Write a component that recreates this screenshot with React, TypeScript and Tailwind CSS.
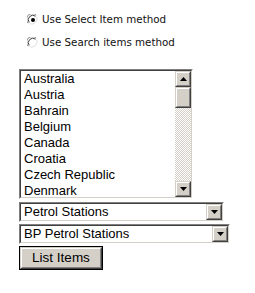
import React from "react";

const Up = () => (
  <svg width="7" height="4" viewBox="0 0 7 4"><path d="M3.5 0 L7 4 L0 4 Z" fill="#000" /></svg>
);
const Down = () => (
  <svg width="7" height="4" viewBox="0 0 7 4"><path d="M0 0 L7 0 L3.5 4 Z" fill="#000" /></svg>
);

function BevelBtn({ children, className = "" }: { children?: React.ReactNode; className?: string }) {
  return (
    <div className={`border border-t-[#d4d0c8] border-l-[#d4d0c8] border-b-[#404040] border-r-[#404040] ${className}`}>
      <div className="w-full h-full border border-t-white border-l-white border-b-[#808080] border-r-[#808080] bg-[#d4d0c8] flex items-center justify-center">
        {children}
      </div>
    </div>
  );
}

function Sunken({ children, className = "" }: { children?: React.ReactNode; className?: string }) {
  return (
    <div className={`border border-t-[#808080] border-l-[#808080] border-b-white border-r-white ${className}`}>
      <div className="w-full h-full border border-t-[#404040] border-l-[#404040] border-b-[#d4d0c8] border-r-[#d4d0c8] bg-white flex">
        {children}
      </div>
    </div>
  );
}

function Radio({ checked }: { checked?: boolean }) {
  return (
    <svg width="12" height="12" viewBox="0 0 12 12">
      <circle cx="6" cy="6" r="5.5" fill="#fff" />
      <path d="M1.2 9.2 A5.5 5.5 0 0 1 9.2 1.2" stroke="#808080" strokeWidth="1" fill="none" />
      <path d="M2.2 8.5 A4.5 4.5 0 0 1 8.5 2.2" stroke="#404040" strokeWidth="1" fill="none" />
      <path d="M9.8 2.8 A5.5 5.5 0 0 1 2.8 9.8" stroke="#e0e0e0" strokeWidth="1" fill="none" />
      {checked && <circle cx="6" cy="6" r="2" fill="#000" />}
    </svg>
  );
}

const countries = ["Australia", "Austria", "Bahrain", "Belgium", "Canada", "Croatia", "Czech Republic", "Denmark"];

export default function App() {
  return (
    <div className="w-[255px] h-[293px] bg-white" style={{ fontFamily: "'Liberation Sans', Arial, sans-serif" }}>
      <div className="pt-[13px] pl-[27px] flex flex-col gap-[9px] text-[10.3px] text-[#111]" style={{ fontFamily: "'DejaVu Sans', Verdana, sans-serif" }}>
        <div className="flex items-center gap-[3px] h-[14px]">
          <Radio checked />
          <span>Use Select Item method</span>
        </div>
        <div className="flex items-center gap-[3px] h-[14px]">
          <Radio />
          <span>Use Search items method</span>
        </div>
      </div>
      <div className="pl-[19px] mt-[19px] flex flex-col items-start text-[13px] text-black">
        <Sunken className="w-[174px] h-[130px]">
          <div className="flex-1 flex flex-col pl-[3px] leading-[16px]">
            {countries.map((c) => (
              <div key={c} className="h-[16px]">{c}</div>
            ))}
          </div>
          <div className="w-[16px] flex flex-col">
            <BevelBtn className="w-[16px] h-[16px]"><Up /></BevelBtn>
            <div className="flex-1 flex flex-col bg-[repeating-conic-gradient(#d4d0c8_0_25%,#ffffff_0_50%)] bg-[length:2px_2px]">
              <BevelBtn className="w-[16px] h-[21px]" />
            </div>
            <BevelBtn className="w-[16px] h-[16px]"><Down /></BevelBtn>
          </div>
        </Sunken>
        <Sunken className="w-[205px] h-[20px] mt-[3px]">
          <div className="flex-1 pl-[3px] leading-[16px]">Petrol Stations</div>
          <BevelBtn className="w-[16px] h-[16px]"><Down /></BevelBtn>
        </Sunken>
        <Sunken className="w-[211px] h-[20px] mt-[2px]">
          <div className="flex-1 pl-[3px] leading-[16px]">BP Petrol Stations</div>
          <BevelBtn className="w-[16px] h-[16px]"><Down /></BevelBtn>
        </Sunken>
        <div className="mt-[2px] border border-black">
          <BevelBtn className="w-[82px] h-[22px]">
            <span className="text-[13.5px]">List Items</span>
          </BevelBtn>
        </div>
      </div>
    </div>
  );
}
